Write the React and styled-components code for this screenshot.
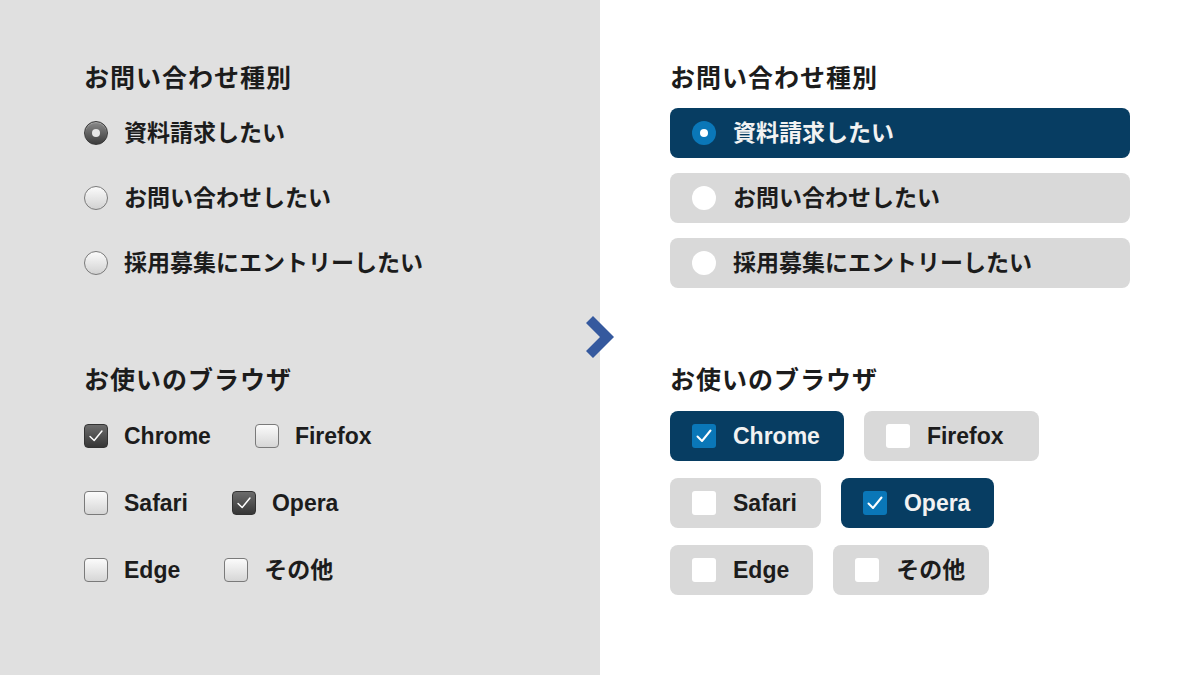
import React from 'react';
import styled, { createGlobalStyle, css } from 'styled-components';

const GlobalStyle = createGlobalStyle`
  html, body {
    margin: 0;
    padding: 0;
  }
  body {
    font-family: "Liberation Sans", "Noto Sans CJK JP", sans-serif;
    color: #1c1c1c;
    -webkit-font-smoothing: antialiased;
  }
`;

const Page = styled.div`
  position: relative;
  display: grid;
  grid-template-columns: 600px 600px;
  width: 1200px;
  height: 675px;
  overflow: hidden;
`;

const Panel = styled.section`
  display: flex;
  flex-direction: column;
  padding: 60px 0 0 ${(p) => (p.$variant === 'after' ? '70px' : '84px')};
  background: ${(p) => (p.$variant === 'after' ? '#ffffff' : '#e0e0e0')};
`;

const Group = styled.div`
  display: flex;
  flex-direction: column;
  & + & {
    margin-top: 74px;
  }
`;

const Heading = styled.h2`
  margin: 0;
  height: 36px;
  line-height: 36px;
  font-size: 25px;
  font-weight: 700;
  letter-spacing: 1px;
`;

const List = styled.div`
  display: flex;
  flex-direction: column;
  gap: ${(p) => p.$gap}px;
  margin-top: ${(p) => p.$top}px;
`;

const Row = styled.div`
  display: flex;
  gap: ${(p) => (p.$variant === 'after' ? '20px' : '44px')};
`;

const Option = styled.label`
  display: flex;
  align-items: center;
  gap: 16px;
  height: 50px;
  box-sizing: border-box;
  font-size: 23px;
  line-height: 1;
  font-weight: 700;
  white-space: nowrap;
  ${(p) =>
    p.$variant === 'after' &&
    css`
      width: ${p.$full ? '460px' : 'auto'};
      min-width: ${p.$min ? `${p.$min}px` : '0'};
      padding: 0 24px 0 22px;
      gap: 17px;
      border-radius: 8px;
      background: ${p.$checked ? '#073d62' : '#d9d9d9'};
      color: ${p.$checked ? '#f2f2f2' : '#1c1c1c'};
    `}
`;

const Label = styled.span`
  display: block;
  line-height: 1;
`;

const RadioMark = styled.span`
  flex: none;
  display: flex;
  align-items: center;
  justify-content: center;
  width: 24px;
  height: 24px;
  box-sizing: border-box;
  border-radius: 50%;
  ${(p) =>
    p.$variant === 'after'
      ? css`
          background: ${p.$checked ? '#0a77b8' : '#ffffff'};
        `
      : p.$checked
      ? css`
          border: 1px solid #3a3a3a;
          background: linear-gradient(#8a8a8a, #3c3c3c);
          box-shadow: inset 0 1px 1px rgba(255, 255, 255, 0.3);
        `
      : css`
          border: 1px solid #7a7a7a;
          background: linear-gradient(#fbfbfb, #d2d2d2);
        `}

  &::after {
    content: '';
    display: ${(p) => (p.$checked ? 'block' : 'none')};
    width: 8px;
    height: 8px;
    border-radius: 50%;
    background: ${(p) => (p.$variant === 'after' ? '#ffffff' : '#e6e6e6')};
  }
`;

const BoxMark = styled.span`
  flex: none;
  display: flex;
  align-items: center;
  justify-content: center;
  width: 24px;
  height: 24px;
  box-sizing: border-box;
  ${(p) =>
    p.$variant === 'after'
      ? css`
          border-radius: 3px;
          background: ${p.$checked ? '#0a77b8' : '#ffffff'};
        `
      : p.$checked
      ? css`
          border-radius: 4px;
          border: 1px solid #333333;
          background: linear-gradient(#6c6c6c, #363636);
        `
      : css`
          border-radius: 4px;
          border: 1px solid #7a7a7a;
          background: linear-gradient(#fbfbfb, #d6d6d6);
        `}

  svg {
    display: block;
  }
`;

const Arrow = styled.svg`
  position: absolute;
  left: 584px;
  top: 314px;
`;

const Check = ({ width }) => (
  <svg width="24" height="24" viewBox="0 0 24 24">
    <path
      d="M5.5 12.5 L10 17 L18.5 6.5"
      fill="none"
      stroke="#ffffff"
      strokeWidth={width}
      strokeLinecap="round"
      strokeLinejoin="round"
    />
  </svg>
);

const radios = [
  { label: '資料請求したい', checked: true },
  { label: 'お問い合わせしたい', checked: false },
  { label: '採用募集にエントリーしたい', checked: false },
];

const browserRows = [
  [
    { label: 'Chrome', checked: true },
    { label: 'Firefox', checked: false, min: 175 },
  ],
  [
    { label: 'Safari', checked: false },
    { label: 'Opera', checked: true },
  ],
  [
    { label: 'Edge', checked: false },
    { label: 'その他', checked: false },
  ],
];

const FormSide = ({ variant }) => (
  <Panel $variant={variant}>
    <Group>
      <Heading>お問い合わせ種別</Heading>
      <List $gap={15} $top={12}>
        {radios.map((r) => (
          <Option key={r.label} $variant={variant} $checked={r.checked} $full>
            <RadioMark $variant={variant} $checked={r.checked} />
            <Label>{r.label}</Label>
          </Option>
        ))}
      </List>
    </Group>
    <Group>
      <Heading>お使いのブラウザ</Heading>
      <List $gap={17} $top={13}>
        {browserRows.map((row, i) => (
          <Row key={i} $variant={variant}>
            {row.map((b) => (
              <Option
                key={b.label}
                $variant={variant}
                $checked={b.checked}
                $min={b.min}
              >
                <BoxMark $variant={variant} $checked={b.checked}>
                  {b.checked && <Check width={variant === 'after' ? 2 : 1.6} />}
                </BoxMark>
                <Label>{b.label}</Label>
              </Option>
            ))}
          </Row>
        ))}
      </List>
    </Group>
  </Panel>
);

const App = () => (
  <>
    <GlobalStyle />
    <Page>
      <FormSide variant="before" />
      <FormSide variant="after" />
      <Arrow width="32" height="46" viewBox="0 0 32 46">
        <polygon points="2,9 9,2 30,23 9,44 2,37 16,23" fill="#35599e" />
      </Arrow>
    </Page>
  </>
);

export default App;
